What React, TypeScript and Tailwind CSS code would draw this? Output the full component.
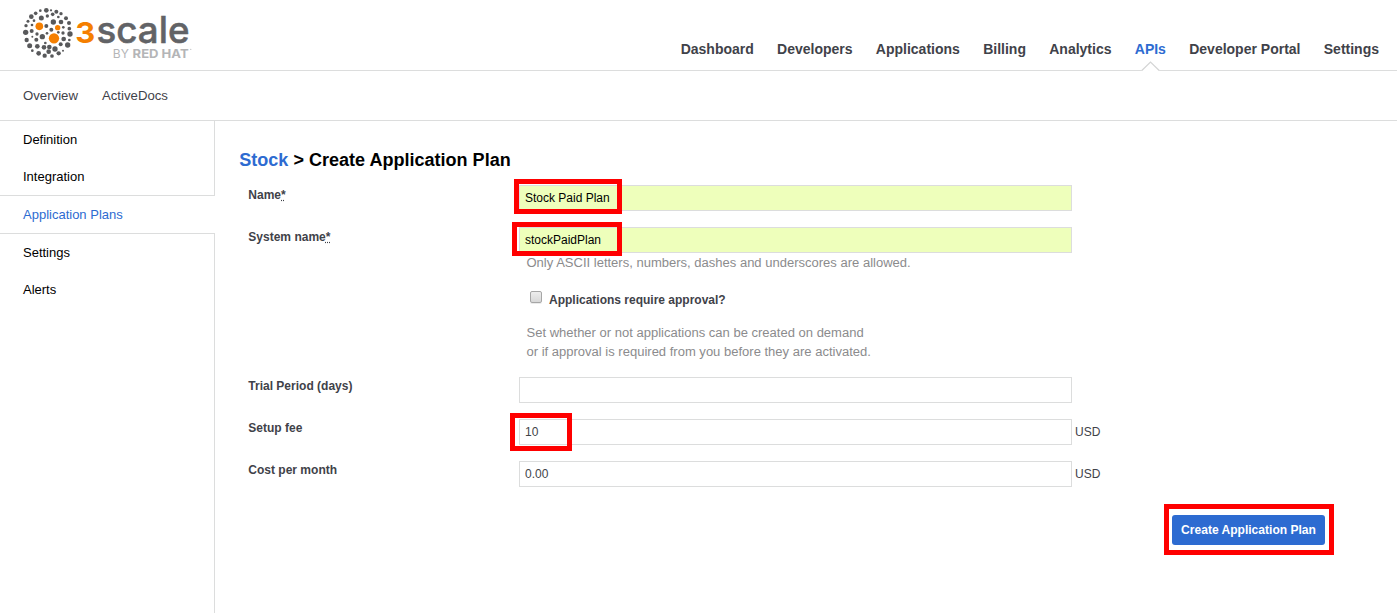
import React from "react";

const GRAY_DOTS: [number, number, number][] = [
  [94, 31, 7], [76, 32, 4], [62, 40, 5.5], [49, 50, 7], [39, 64, 4.5], [33, 77, 5], [32, 97, 8],
  [35, 120, 6.5], [44, 137, 7.5], [52, 152, 4], [71, 160, 7], [89, 167, 6.5], [111, 168, 5.5],
  [131, 160, 6.5], [144, 152, 3], [158, 135, 8], [163, 120, 4], [165, 102, 8], [163, 86, 5.5],
  [162, 69, 6], [153, 55, 6], [138, 41, 5], [124, 35, 6], [108, 31, 3.5], [113, 43, 5.5],
  [97, 48, 5], [79, 54, 7.5], [57, 62, 4], [51, 75, 4], [50, 93, 6], [66, 102, 5], [52, 110, 3],
  [64, 119, 6], [82, 110, 8], [96, 100, 4], [94, 78, 6], [109, 89, 6], [115, 66, 8], [138, 66, 7],
  [130, 51, 4], [145, 82, 4], [144, 99, 5], [146, 117, 7], [137, 133, 6], [120, 147, 8],
  [101, 155, 7], [87, 142, 7], [67, 139, 7], [103, 141, 7], [91, 129, 4], [130, 97, 4],
];

const ORANGE_DOTS: [number, number, number][] = [[73, 79, 11.5], [117, 115, 15.5], [128, 83, 8]];

const NAV = ["Dashboard", "Developers", "Applications", "Billing", "Analytics", "APIs", "Developer Portal", "Settings"];

function Logo() {
  return (
    <svg width="200" height="70" viewBox="0 0 200 70" role="img" aria-label="3scale by Red Hat">
      <g transform="translate(15 0) scale(0.33333)">
        {GRAY_DOTS.map(([x, y, r]) => (
          <circle key={`${x}-${y}`} cx={x} cy={y} r={r} fill="#58595b" />
        ))}
        {ORANGE_DOTS.map(([x, y, r]) => (
          <circle key={`${x}-${y}`} cx={x} cy={y} r={r} fill="#f57f00" />
        ))}
      </g>
      <g fontFamily="Inter, sans-serif">
        <text x="75.2" y="43" fontSize="29" fontWeight="700" fill="#f57f00" textLength="20" lengthAdjust="spacingAndGlyphs">3</text>
        <text x="96.5" y="42.9" fontSize="36.5" fontWeight="500" fill="#626366" stroke="#626366" strokeWidth="0.5" textLength="93" lengthAdjust="spacingAndGlyphs">scale</text>
        <text x="112.8" y="57.6" fontSize="11.8" fontWeight="400" fill="#b4b5b7" textLength="16" lengthAdjust="spacingAndGlyphs">BY</text>
        <text x="132.6" y="57.6" fontSize="11.8" fontWeight="700" fill="#b4b5b7" textLength="56" lengthAdjust="spacingAndGlyphs">RED HAT</text>
      </g>
      <circle cx="190.8" cy="49.3" r="0.6" fill="#b4b5b7" />
    </svg>
  );
}

function Highlight({ className }: { className: string }) {
  return <div className={`pointer-events-none absolute border-5 border-[#ff0000] ${className}`} />;
}

function Row({ label, required, children }: { label: string; required?: boolean; children: React.ReactNode }) {
  return (
    <div className="flex items-start">
      <label className={`w-[270.7px] shrink-0 text-[12.03px] leading-[18px] font-bold ${required ? "pt-px" : ""}`}>
        {label}
        {required && <abbr title="required" className="underline decoration-dotted">*</abbr>}
      </label>
      {children}
    </div>
  );
}

function Field({ value, filled, unit, children }: { value: string; filled?: boolean; unit?: string; children?: React.ReactNode }) {
  return (
    <div className="relative flex items-center gap-[3px] text-xs">
      <input
        defaultValue={value}
        className={`h-[26px] w-[553px] border border-[#dcdddd] px-[5px] outline-none ${filled ? "bg-[#eeffbb] text-black" : "bg-white text-[#414348]"}`}
      />
      {unit && <span>{unit}</span>}
      {children}
    </div>
  );
}

export default function App() {
  return (
    <div className="flex h-[613px] w-[1397px] flex-col overflow-hidden bg-white font-['Liberation_Sans',Arial,sans-serif] text-[13px] text-[#3f4249]">
      <header className="flex h-[71px] shrink-0 items-start justify-between border-b border-[#dcdddd] pr-[18px]">
        <Logo />
        <nav className="flex gap-[23.3px] pt-[39px] text-sm leading-5 font-bold">
          {NAV.map((item) => (
            <a key={item} className={`relative ${item === "APIs" ? "text-[#2d6bd1]" : ""}`}>
              {item}
              {item === "APIs" && (
                <svg className="absolute top-[22px] left-[6px]" width="19" height="11" viewBox="0 0 19 11">
                  <path d="M0.8 9.5 9.5 1 18.2 9.5V11H0.8z" fill="#fff" />
                  <path d="M0.8 9.5 9.5 1 18.2 9.5" fill="none" stroke="#d4d5d5" strokeWidth="1.2" />
                </svg>
              )}
            </a>
          ))}
        </nav>
      </header>
      <nav className="flex h-[50px] shrink-0 items-center gap-6 border-b border-[#dcdddd] pl-[23px] text-[13.2px]">
        <a>Overview</a>
        <a>ActiveDocs</a>
      </nav>
      <div className="flex min-h-0 flex-1">
        <aside className="flex w-[215px] shrink-0 flex-col leading-[37px] text-black">
          <div className="h-[74px] border-r border-[#dcdddd] pl-[23px]">
            <a className="block">Definition</a>
            <a className="block">Integration</a>
          </div>
          <a className="block h-[39px] border-y border-[#dcdddd] pl-[23px] text-[#2d6bd1]">Application Plans</a>
          <div className="flex-1 border-r border-[#dcdddd] pl-[23px]">
            <a className="block">Settings</a>
            <a className="block">Alerts</a>
          </div>
        </aside>
        <main className="flex-1 pt-[27px] pl-[24.3px]">
          <h2 className="text-[18.04px] leading-6 font-bold text-black">
            <a className="text-[#2d6bd1]">Stock</a> &gt; Create Application Plan
          </h2>
          <form className="flex flex-col gap-4 pt-[13px] pl-[9px]">
            <Row label="Name" required>
              <Field value="Stock Paid Plan" filled>
                <Highlight className="-top-1.5 -left-[5px] h-[35px] w-[108px]" />
              </Field>
            </Row>
            <Row label="System name" required>
              <div>
                <Field value="stockPaidPlan" filled>
                  <Highlight className="-top-[5px] -left-[7px] z-10 h-[34px] w-[110px]" />
                </Field>
                <div className="pl-[7.5px] text-[13.02px] leading-[19px] text-[#8b8b8d]">
                  <p>Only ASCII letters, numbers, dashes and underscores are allowed.</p>
                  <label className="mt-[19px] flex items-center text-xs leading-[19px] font-bold text-[#3f4249]">
                    <span className="mr-[7px] mb-[7px] ml-[3.5px] size-3 rounded-[2px] border border-[#a6a6a6] bg-linear-to-b from-[#ededed] to-[#d8d8d8] shadow-[0_1px_0_#ebebeb]" />
                    Applications require approval?
                  </label>
                  <p className="mt-[13px]">
                    Set whether or not applications can be created on demand
                    <br />
                    or if approval is required from you before they are activated.
                  </p>
                </div>
              </div>
            </Row>
            <Row label="Trial Period (days)">
              <Field value="" />
            </Row>
            <Row label="Setup fee">
              <Field value="10" unit="USD">
                <Highlight className="-top-1.5 -left-[9px] h-[38px] w-[62px]" />
              </Field>
            </Row>
            <Row label="Cost per month">
              <Field value="0.00" unit="USD" />
            </Row>
            <div className="flex justify-end pt-3 pr-[72px]">
              <div className="relative">
                <button type="button" className="block h-[30px] w-[153px] rounded-[3px] bg-[#2d6bd1] text-[12.05px] font-bold text-white">
                  Create Application Plan
                </button>
                <Highlight className="-top-[11px] -left-2 h-[51px] w-[170px]" />
              </div>
            </div>
          </form>
        </main>
      </div>
    </div>
  );
}
